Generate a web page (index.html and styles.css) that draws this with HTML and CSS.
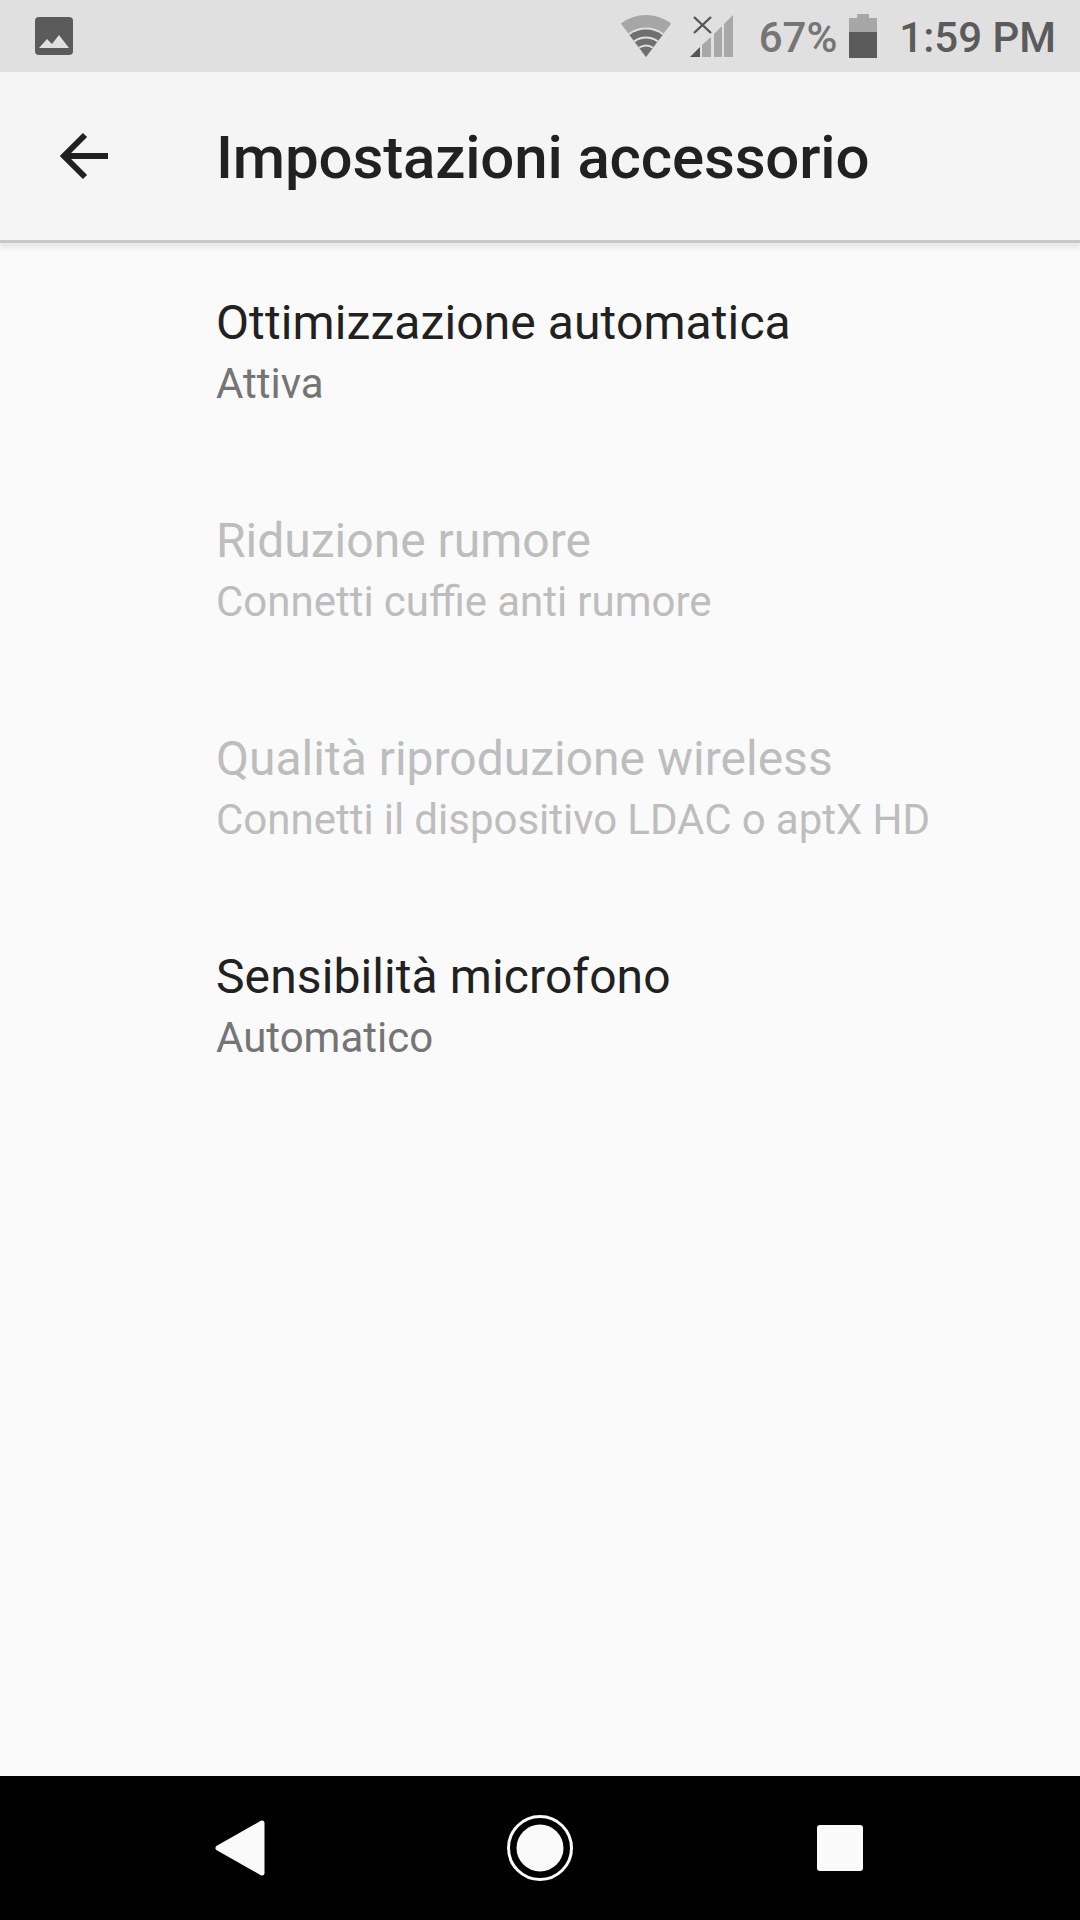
FILE: index.html
```html
<!DOCTYPE html>
<html lang="it">
<head>
  <meta charset="UTF-8">
  <meta name="viewport" content="width=device-width, initial-scale=1.0">
  <title>Impostazioni accessorio</title>
  <link rel="stylesheet" href="styles.css">
</head>
<body>
  <div class="screen">
    <div class="status-bar">
      <svg class="notif-icon" width="40" height="40" viewBox="0 0 40 40">
        <rect x="1" y="1" width="38" height="38" rx="4" fill="#5b5b5b"/>
        <path d="M5 32 L13 23 L18 28 L25 19 L35 32 Z" fill="#e0e0e0"/>
      </svg>
      <div class="status-right">
        <svg class="wifi" width="52" height="44" viewBox="0 0 52 44">
          <path d="M0.8 9.4 A42 42 0 0 1 51.2 9.4 L26 43 Z" fill="#a6a6a6"/>
          <path d="M8.3 19.4 A29.5 29.5 0 0 1 43.7 19.4 L26 43 Z" fill="#e0e0e0"/>
          <path d="M9.5 21 A27.5 27.5 0 0 1 42.5 21 L26 43 Z" fill="#6f6f6f"/>
          <path d="M14.3 27.4 A19.5 19.5 0 0 1 37.7 27.4 M19.1 33.8 A11.5 11.5 0 0 1 32.9 33.8" stroke="#e0e0e0" stroke-width="2" fill="none"/>
        </svg>
        <svg class="signal" width="46" height="44" viewBox="0 0 46 44">
          <path d="M1 43 L11 33 V43 Z" fill="#555"/>
          <path d="M13 31 L22 23 V43 H13 Z M25 20 L33 12 V43 H25 Z M35 10 L44 1 V43 H35 Z" fill="#a8a8a8"/>
          <path d="M5 3 L22 19 M22 3 L5 19" stroke="#555" stroke-width="2.4" fill="none"/>
        </svg>
        <span class="battery-text">67%</span>
        <svg class="battery" width="28" height="44" viewBox="0 0 28 44">
          <path d="M8 0 H20 V4 H28 V44 H0 V4 H8 Z" fill="#a6a6a6"/>
          <rect x="0" y="18" width="28" height="26" fill="#5b5b5b"/>
        </svg>
        <span class="clock">1:59 PM</span>
      </div>
    </div>

    <header class="app-bar">
      <svg class="back-arrow" width="48" height="48" viewBox="0 0 48 48">
        <path d="M48 24 H4 M25 3 L4 24 L25 45" stroke="#212121" stroke-width="6" fill="none"/>
      </svg>
      <h1 class="title">Impostazioni accessorio</h1>
    </header>

    <main class="settings">
      <div class="setting">
        <div class="setting-name">Ottimizzazione automatica</div>
        <div class="setting-value">Attiva</div>
      </div>
      <div class="setting disabled">
        <div class="setting-name">Riduzione rumore</div>
        <div class="setting-value">Connetti cuffie anti rumore</div>
      </div>
      <div class="setting disabled">
        <div class="setting-name">Qualità riproduzione wireless</div>
        <div class="setting-value">Connetti il dispositivo LDAC o aptX HD</div>
      </div>
      <div class="setting">
        <div class="setting-name">Sensibilità microfono</div>
        <div class="setting-value">Automatico</div>
      </div>
    </main>

    <nav class="nav-bar">
      <svg width="52" height="58" viewBox="0 0 52 58">
        <path d="M48 4 V54 L4 29 Z" fill="#fafafa" stroke="#fafafa" stroke-width="5" stroke-linejoin="round"/>
      </svg>
      <svg width="66" height="66" viewBox="0 0 66 66">
        <circle cx="33" cy="33" r="31.5" fill="none" stroke="#fafafa" stroke-width="3"/>
        <circle cx="33" cy="33" r="23.5" fill="#fafafa"/>
      </svg>
      <div class="nav-square"></div>
    </nav>
  </div>
</body>
</html>
```

FILE: styles.css
```css
* {
  box-sizing: border-box;
}

body {
  margin: 0;
  font-family: "Roboto", sans-serif;
  background: #fafafa;
}

.screen {
  width: 1080px;
  height: 1920px;
  display: flex;
  flex-direction: column;
  overflow: hidden;
}

.status-bar {
  height: 72px;
  background: #e0e0e0;
  display: flex;
  align-items: center;
  justify-content: space-between;
  padding: 0 24px 0 34px;
  flex-shrink: 0;
}

.notif-icon {
  display: block;
}

.status-right {
  display: flex;
  align-items: center;
  height: 100%;
}

.wifi {
  margin-right: 17px;
}

.signal {
  margin-right: 24px;
}

.battery-text {
  font-size: 42px;
  font-weight: 500;
  color: #757575;
  margin: 2px 12px 0 0;
}

.battery {
  margin-right: 22px;
}

.clock {
  font-size: 42px;
  font-weight: 500;
  color: #5b5b5b;
  margin-top: 2px;
}

.app-bar {
  height: 168px;
  background: #f5f5f5;
  display: flex;
  align-items: center;
  flex-shrink: 0;
  padding-left: 60px;
  box-shadow: 0 3px 0 #c8c8c8, 0 8px 4px rgba(0, 0, 0, 0.07);
  position: relative;
}

.back-arrow {
  margin-right: 108px;
}

.title {
  margin: 2px 0 0;
  font-size: 60px;
  font-weight: 500;
  letter-spacing: -0.15px;
  color: #212121;
}

.settings {
  flex: 1;
  padding: 52px 0 0 216px;
}

.setting {
  height: 218px;
}

.setting-name {
  font-size: 48px;
  line-height: 61px;
  letter-spacing: 0.1px;
  color: #212121;
}

.setting-value {
  font-size: 42px;
  line-height: 61px;
  word-spacing: -0.3px;
  color: #757575;
}

.setting.disabled .setting-name,
.setting.disabled .setting-value {
  color: #bdbdbd;
}

.setting.disabled .setting-name {
  letter-spacing: 0;
}

.nav-bar {
  height: 144px;
  background: #000;
  display: flex;
  align-items: center;
  flex-shrink: 0;
  padding-left: 214px;
  gap: 241px;
}

.nav-square {
  width: 46px;
  height: 46px;
  margin-left: 3px;
  background: #fafafa;
  border-radius: 3px;
}
```
